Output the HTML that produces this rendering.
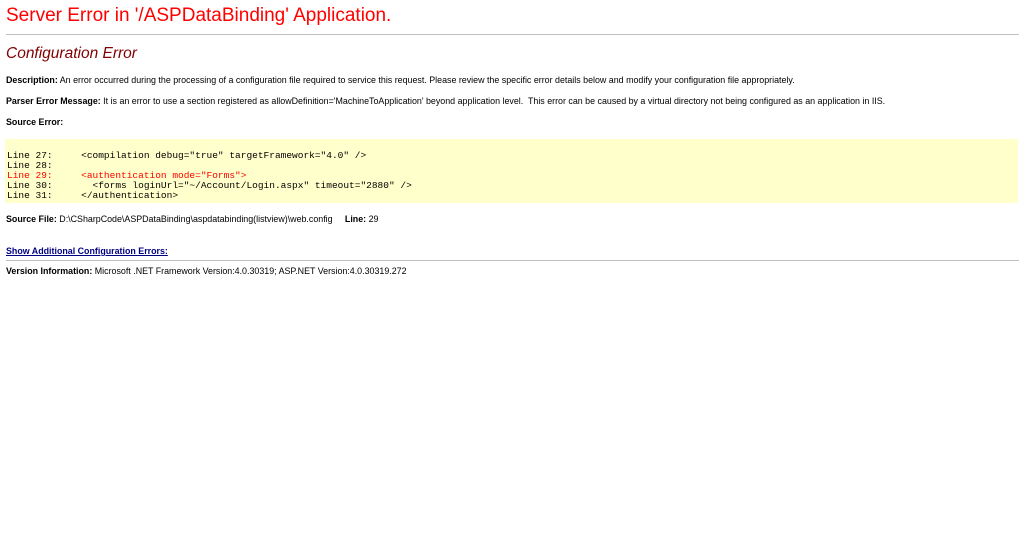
<!DOCTYPE html>
<html><head><style>
body{margin:0;background:#fff;font-family:"Liberation Sans",sans-serif;color:#000;width:1024px;height:538px;position:relative;overflow:hidden}
.a{position:absolute;left:6px;white-space:nowrap;font-size:8.9px}
b{font-weight:bold}
h1{position:absolute;left:6px;top:5px;margin:0;font-weight:normal;font-size:19px;color:#f00}
h2{position:absolute;left:6px;top:45px;margin:0;font-weight:normal;font-style:italic;font-size:15.5px;color:#800000}
.hr{position:absolute;left:6px;right:5px;height:1px;background:#c0c0c0}
.box{position:absolute;left:5px;width:1013px;top:139px;height:64px;background:#ffffcc}
pre{position:absolute;left:7px;top:151px;margin:0;font-family:"Liberation Mono",monospace;font-size:9.5px;line-height:10px;color:#000}
.r{color:#f00}
a{color:#000080;font-weight:bold;text-decoration:underline}
</style></head><body>
<h1>Server Error in '/ASPDataBinding' Application.</h1>
<div class="hr" style="top:34px"></div>
<h2>Configuration Error</h2>
<div class="a" style="top:75px"><b>Description:</b> An error occurred during the processing of a configuration file required to service this request. Please review the specific error details below and modify your configuration file appropriately.</div>
<div class="a" style="top:96px"><b>Parser Error Message:</b> It is an error to use a section registered as allowDefinition='MachineToApplication' beyond application level.&nbsp; This error can be caused by a virtual directory not being configured as an application in IIS.</div>
<div class="a" style="top:117px"><b>Source Error:</b></div>
<div class="box"></div>
<pre>Line 27:     &lt;compilation debug="true" targetFramework="4.0" /&gt;
Line 28:
<span class="r">Line 29:     &lt;authentication mode="Forms"&gt;</span>
Line 30:       &lt;forms loginUrl="~/Account/Login.aspx" timeout="2880" /&gt;
Line 31:     &lt;/authentication&gt;</pre>
<div class="a" style="top:214px"><b>Source File:</b> D:\CSharpCode\ASPDataBinding\aspdatabinding(listview)\web.config &nbsp; &nbsp; <b>Line:</b> 29</div>
<div class="a" style="top:246px"><a>Show Additional Configuration Errors:</a></div>
<div class="hr" style="top:260px"></div>
<div class="a" style="top:266px"><b>Version Information:</b> Microsoft .NET Framework Version:4.0.30319; ASP.NET Version:4.0.30319.272</div>
</body></html>
